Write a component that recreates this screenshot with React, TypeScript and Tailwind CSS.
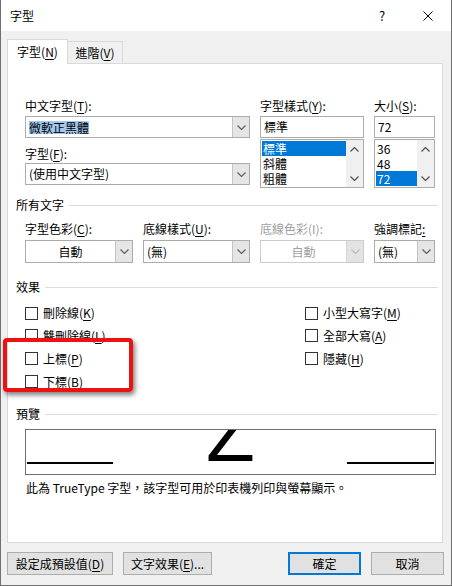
import React from "react";

const FONT = "font-['Noto_Sans_CJK_TC','Noto_Sans',sans-serif]";

function K({ children }: { children: React.ReactNode }) {
  return <span className="underline decoration-1 underline-offset-[2px]">{children}</span>;
}

function Label({ children, disabled }: { children: React.ReactNode; disabled?: boolean }) {
  return (
    <div className={`h-[16px] whitespace-nowrap leading-[16px] ${disabled ? "text-[#a0a0a0]" : "text-black"}`}>
      {children}
    </div>
  );
}

function Chevron({ color = "#606060", up = false }: { color?: string; up?: boolean }) {
  return (
    <svg width="9" height="5" viewBox="0 0 9 5">
      <polyline
        points={up ? "0.5,4.5 4.5,0.5 8.5,4.5" : "0.5,0.5 4.5,4.5 8.5,0.5"}
        fill="none"
        stroke={color}
        strokeWidth="1.2"
      />
    </svg>
  );
}

function Combo({
  children,
  center,
  disabled,
  tall,
}: {
  children: React.ReactNode;
  center?: boolean;
  disabled?: boolean;
  tall?: boolean;
}) {
  return (
    <div
      className={`flex border bg-white ${tall ? "h-[23px]" : "h-[22px]"} ${
        disabled ? "border-[#cccccc]" : "border-[#acacac]"
      }`}
    >
      <div
        className={`flex flex-1 items-center overflow-hidden whitespace-nowrap px-[3px] ${
          center ? "justify-center" : ""
        } ${disabled ? "text-[#a0a0a0]" : ""}`}
      >
        {children}
      </div>
      <div
        className={`flex w-[17px] items-center justify-center border-l ${
          disabled ? "border-[#d6d6d6] bg-[#e3e3e3]" : "border-[#c4c4c4] bg-[#e5e5e5]"
        }`}
      >
        <Chevron color={disabled ? "#bdbdbd" : "#606060"} />
      </div>
    </div>
  );
}

function ListBox({ items, selected }: { items: string[]; selected: string }) {
  return (
    <div className="mt-[1px] flex h-[49px] border border-[#acacac] bg-white">
      <div className="flex-1 py-[1px] pl-[1px]">
        {items.map((it) => (
          <div
            key={it}
            className={`h-[15px] pl-[1px] leading-[15px] ${it === selected ? "bg-[#0078d7] text-white" : ""}`}
          >
            {it}
          </div>
        ))}
      </div>
      <div className="flex w-[17px] flex-col items-center justify-between bg-[#f0f0f0] pb-[6px] pt-[7px]">
        <Chevron up color="#505050" />
        <Chevron color="#505050" />
      </div>
    </div>
  );
}

function Check({ children, className = "h-[22px]" }: { children: React.ReactNode; className?: string }) {
  return (
    <div className={`flex items-center ${className}`}>
      <div className="h-[13px] w-[13px] border border-[#333333] bg-white" />
      <span className="ml-[5px] whitespace-nowrap leading-[16px]">{children}</span>
    </div>
  );
}

function Group({ children }: { children: React.ReactNode }) {
  return (
    <div className="flex h-[16px] items-center pl-[8px] pr-[4px]">
      <span className="whitespace-nowrap leading-[16px]">{children}</span>
      <div className="ml-[5px] h-px flex-1 bg-[#dcdcdc]" />
    </div>
  );
}

function Button({ children, width, primary }: { children: React.ReactNode; width: string; primary?: boolean }) {
  return (
    <div
      className={`flex h-[23px] items-center justify-center bg-[#e1e1e1] ${width} ${
        primary ? "border-2 border-[#0078d7]" : "border border-[#adadad]"
      }`}
    >
      {children}
    </div>
  );
}

export default function App() {
  return (
    <div
      lang="zh-TW"
      className={`flex h-[586px] w-[452px] flex-col border-x border-b border-[#707070] bg-[#f0f0f0] text-[12px] text-black ${FONT}`}
    >
      {/* title bar */}
      <div className="flex h-[31px] items-center bg-white">
        <span className="flex-1 pl-[9px] leading-[16px]">字型</span>
        <div className="flex h-full w-[46px] items-center justify-center text-[13px]">?</div>
        <div className="flex h-full w-[46px] items-center justify-center">
          <svg width="10" height="10" viewBox="0 0 10 10">
            <path d="M0.5 0.5 L9.5 9.5 M9.5 0.5 L0.5 9.5" stroke="#000" strokeWidth="1" />
          </svg>
        </div>
      </div>

      {/* tabs */}
      <div className="flex h-[24px] pl-[6px] pt-[8px] box-content">
        <div className="relative z-10 flex h-[25px] w-[61px] items-center justify-center border-x border-t border-[#d9d9d9] bg-white">
          字型(<K>N</K>)
        </div>
        <div className="mt-[2px] flex h-[22px] w-[55px] items-center justify-center border-r border-t border-[#d9d9d9] bg-[#f0f0f0]">
          進階(<K>V</K>)
        </div>
      </div>

      {/* panel */}
      <div className="ml-[6px] flex h-[480px] w-[436px] flex-col border border-[#d9d9d9] bg-white">
        <div className="mt-[34px] grid grid-cols-[225px_104px_61px] gap-x-[10px] pl-[17px]">
          <div className="flex flex-col">
            <Label>
              中文字型(<K>T</K>):
            </Label>
            <div className="mt-[2px]">
              <Combo>
                <span className="bg-[#a4c8ee] leading-[13px]">微軟正黑體</span>
              </Combo>
            </div>
            <div className="mt-[8px]">
              <Label>
                字型(<K>F</K>):
              </Label>
            </div>
            <div className="mt-[1px]">
              <Combo>(使用中文字型)</Combo>
            </div>
          </div>
          <div className="flex flex-col">
            <Label>
              字型樣式(<K>Y</K>):
            </Label>
            <div className="mt-[2px] flex h-[22px] items-center border border-[#acacac] bg-white px-[3px]">標準</div>
            <ListBox items={["標準", "斜體", "粗體"]} selected="標準" />
          </div>
          <div className="flex flex-col">
            <Label>
              大小(<K>S</K>):
            </Label>
            <div className="mt-[2px] flex h-[22px] items-center border border-[#acacac] bg-white px-[3px]">72</div>
            <ListBox items={["36", "48", "72"]} selected="72" />
          </div>
        </div>

        <div className="mt-[9px]">
          <Group>所有文字</Group>
        </div>
        <div className="mt-[8px] grid grid-cols-[108px_107px_104px_61px] gap-x-[10px] pl-[17px]">
          <div className="flex flex-col">
            <Label>
              字型色彩(<K>C</K>):
            </Label>
            <div className="mt-[3px]">
              <Combo center tall>
                自動
              </Combo>
            </div>
          </div>
          <div className="flex flex-col">
            <Label>
              底線樣式(<K>U</K>):
            </Label>
            <div className="mt-[3px]">
              <Combo tall>(無)</Combo>
            </div>
          </div>
          <div className="flex flex-col">
            <Label disabled>底線色彩(I):</Label>
            <div className="mt-[3px]">
              <Combo center disabled tall>
                自動
              </Combo>
            </div>
          </div>
          <div className="flex flex-col">
            <Label>
              強調標記<K>:</K>
            </Label>
            <div className="mt-[3px]">
              <Combo tall>(無)</Combo>
            </div>
          </div>
        </div>

        <div className="mt-[16px]">
          <Group>效果</Group>
        </div>
        <div className="mt-[7px] grid grid-cols-[280px_1fr] pl-[17px]">
          <div className="relative flex flex-col">
            <Check>
              刪除線(<K>K</K>)
            </Check>
            <Check className="h-[23px]">
              雙刪除線(<K>L</K>)
            </Check>
            <Check className="h-[23px]">
              上標(<K>P</K>)
            </Check>
            <Check className="h-[23px]">
              下標(<K>B</K>)
            </Check>
            <div className="absolute left-[-22px] top-[36px] h-[54px] w-[130px] rounded-[4px] border-[4px] border-[#ee1111] shadow-[2px_3px_5px_rgba(0,0,0,0.5)]" />
          </div>
          <div className="flex flex-col">
            <Check>
              小型大寫字(<K>M</K>)
            </Check>
            <Check className="h-[23px]">
              全部大寫(<K>A</K>)
            </Check>
            <Check className="h-[23px]">
              隱藏(<K>H</K>)
            </Check>
          </div>
        </div>

        <div className="mt-[13px]">
          <Group>預覽</Group>
        </div>
        <div className="relative ml-[17px] mt-[7px] h-[46px] w-[411px] overflow-hidden border border-[#6e6e6e] bg-white">
          <div className="flex justify-between px-[1px] pt-[32px]">
            <div className="h-[2px] w-[86px] bg-black" />
            <div className="h-[2px] w-[87px] bg-black" />
          </div>
          <span className="absolute left-1/2 top-[-36px] -translate-x-1/2 font-['Liberation_Sans',sans-serif] text-[80px] leading-none">
            Z
          </span>
        </div>
        <div className="mt-[5px] h-[16px] whitespace-nowrap pl-[18px] leading-[16px]">
          此為 TrueType 字型，該字型可用於印表機列印與螢幕顯示。
        </div>
      </div>

      {/* buttons */}
      <div className="mt-[9px] flex justify-between pl-[6px] pr-[7px]">
        <div className="flex gap-[10px]">
          <Button width="w-[106px]">
            設定成預設值(<K>D</K>)
          </Button>
          <Button width="w-[89px]">
            文字效果(<K>E</K>)...
          </Button>
        </div>
        <div className="flex gap-[10px]">
          <Button width="w-[73px]" primary>
            確定
          </Button>
          <Button width="w-[73px]">取消</Button>
        </div>
      </div>
    </div>
  );
}
